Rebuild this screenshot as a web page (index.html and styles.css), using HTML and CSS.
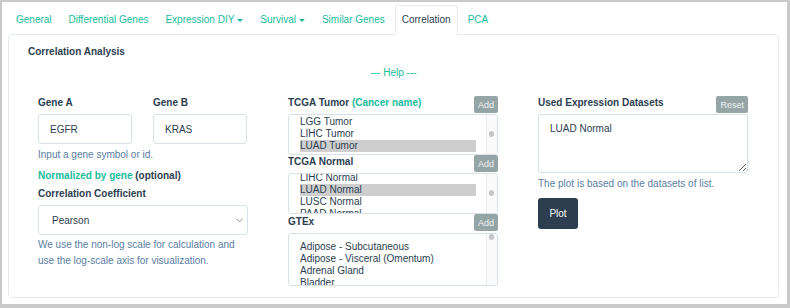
FILE: index.html
```html
<!DOCTYPE html>
<html lang="en">
<head>
    <meta charset="UTF-8">
    <meta name="viewport" content="width=device-width, initial-scale=1.0">
    <title>Correlation Analysis</title>
    <link rel="stylesheet" href="styles.css">
</head>
<body>
    <div class="frame">
        <ul class="tabs">
            <li><a>General</a></li>
            <li><a>Differential Genes</a></li>
            <li><a>Expression DIY<span class="caret"></span></a></li>
            <li><a>Survival<span class="caret"></span></a></li>
            <li><a>Similar Genes</a></li>
            <li class="active"><a>Correlation</a></li>
            <li><a>PCA</a></li>
        </ul>

        <div class="panel">
            <h4 class="title">Correlation Analysis</h4>
            <div class="help"><a>--- Help ---</a></div>

            <div class="cols">
                <!-- genes -->
                <div class="col">
                    <div class="genes">
                        <div>
                            <div class="head"><label>Gene A</label></div>
                            <input class="field" type="text" value="EGFR">
                        </div>
                        <div>
                            <div class="head"><label>Gene B</label></div>
                            <input class="field" type="text" value="KRAS">
                        </div>
                    </div>
                    <p class="hint hint-gene">Input a gene symbol or id.</p>
                    <p class="norm"><a>Normalized by gene</a> (optional)</p>
                    <p class="coef">Correlation Coefficient</p>
                    <div class="select">
                        <span>Pearson</span>
                        <svg width="7" height="5" viewBox="0 0 7 5"><polyline points="0.5,0.8 3.5,3.8 6.5,0.8" fill="none" stroke="#8a8a8a" stroke-width="1"/></svg>
                    </div>
                    <p class="hint hint-scale">We use the non-log scale for calculation and use the log-scale axis for visualization.</p>
                </div>

                <!-- datasets -->
                <div class="col">
                    <div class="head">
                        <label>TCGA Tumor <span class="green">(Cancer name)</span></label>
                        <button class="btn-add">Add</button>
                    </div>
                    <div class="list list-tumor">
                        <div class="opts">
                            <div class="opt">LGG Tumor</div>
                            <div class="opt">LIHC Tumor</div>
                            <div class="opt sel">LUAD Tumor</div>
                        </div>
                        <div class="scroll"><div class="thumb"></div></div>
                    </div>

                    <div class="head">
                        <label>TCGA Normal</label>
                        <button class="btn-add">Add</button>
                    </div>
                    <div class="list list-normal">
                        <div class="opts">
                            <div class="opt">LIHC Normal</div>
                            <div class="opt sel">LUAD Normal</div>
                            <div class="opt">LUSC Normal</div>
                            <div class="opt">PAAD Normal</div>
                        </div>
                        <div class="scroll"><div class="thumb"></div></div>
                    </div>

                    <div class="head head-gtex">
                        <label>GTEx</label>
                        <button class="btn-add">Add</button>
                    </div>
                    <div class="list list-gtex">
                        <div class="opts">
                            <div class="opt">Adipose - Subcutaneous</div>
                            <div class="opt">Adipose - Visceral (Omentum)</div>
                            <div class="opt">Adrenal Gland</div>
                            <div class="opt">Bladder</div>
                        </div>
                        <div class="scroll"><div class="thumb"></div></div>
                    </div>
                </div>

                <!-- used -->
                <div class="col">
                    <div class="head">
                        <label>Used Expression Datasets</label>
                        <button class="btn-add">Reset</button>
                    </div>
                    <textarea class="used">LUAD Normal</textarea>
                    <p class="hint hint-used">The plot is based on the datasets of list.</p>
                    <button class="btn-plot">Plot</button>
                </div>
            </div>
        </div>
    </div>
</body>
</html>
```

FILE: styles.css
```css
body {
    margin: 0;
    font-family: "Liberation Sans", Arial, sans-serif;
    font-size: 10px;
    color: #2c3e50;
}
.frame {
    height: 308px;
    box-sizing: border-box;
    border-style: solid;
    border-color: #c9c9c9;
    border-width: 2px 3px 4px 2px;
    background: #fff;
}
.tabs {
    position: relative;
    z-index: 1;
    display: flex;
    list-style: none;
    margin: 3px 0 0;
    padding: 0 0 0 7px;
}
.tabs a {
    display: block;
    line-height: 28px;
    padding: 0 6px;
    margin-right: 3px;
    border: 1px solid transparent;
    border-radius: 3px 3px 0 0;
    color: #18bc9c;
}
.tabs .active a {
    color: #2c3e50;
    background: #fff;
    border-color: #e6ecee;
    border-bottom-color: #fff;
}
.caret {
    display: inline-block;
    width: 0;
    height: 0;
    margin-left: 3px;
    vertical-align: middle;
    border-top: 3px solid #18bc9c;
    border-left: 3px solid transparent;
    border-right: 3px solid transparent;
}
.panel {
    height: 264px;
    box-sizing: border-box;
    margin: -1px 8px 0 6px;
    padding: 11px 19px 0;
    border: 1px solid #e6ecee;
    border-radius: 4px;
}
.title {
    margin: 0;
    font-size: 10px;
    line-height: 12px;
}
.help {
    margin-top: 9px;
    line-height: 12px;
    text-align: center;
    color: #18bc9c;
}
.cols {
    display: grid;
    grid-template-columns: 210px 210px 210px;
    column-gap: 40px;
    margin-top: 17px;
    padding-left: 10px;
}
.head {
    display: flex;
    justify-content: space-between;
    align-items: flex-start;
    height: 18px;
}
.head label {
    padding-top: 1px;
    line-height: 12px;
    font-weight: bold;
}
.head-gtex {
    height: 19px;
}
.head-gtex label {
    padding-top: 2px;
}
.green {
    color: #18bc9c;
}
.genes {
    display: grid;
    grid-template-columns: 94px 94px;
    column-gap: 21px;
}
.field {
    display: block;
    width: 100%;
    height: 30px;
    box-sizing: border-box;
    margin: 0;
    padding: 0 11px;
    border: 1px solid #d9e1e8;
    border-radius: 3px;
    font: inherit;
    color: #2c3e50;
    outline: none;
}
p {
    margin: 0;
    line-height: 12px;
}
.hint {
    color: #597ea2;
}
.hint-gene {
    margin-top: 5px;
}
.norm {
    margin-top: 9px;
    font-weight: bold;
}
.norm a {
    color: #18bc9c;
}
.coef {
    margin-top: 6px;
    font-weight: bold;
}
.select {
    display: flex;
    justify-content: space-between;
    align-items: center;
    height: 30px;
    box-sizing: border-box;
    margin-top: 5px;
    padding: 0 4px 0 13px;
    border: 1px solid #d9e1e8;
    border-radius: 3px;
}
.hint-scale {
    margin-top: 2px;
    line-height: 16px;
}
.btn-add {
    height: 17px;
    margin: 0;
    padding: 0 4px;
    border: none;
    border-radius: 2px;
    background: #95a5a6;
    color: #eef2f2;
    font-family: inherit;
    font-size: 9px;
}
.list {
    display: flex;
    box-sizing: border-box;
    border: 1px solid #d9e1e8;
    border-radius: 3px;
    overflow: hidden;
}
.list-tumor { height: 41px; }
.list-normal { height: 41px; }
.list-gtex { height: 53px; }
.opts {
    flex: 1;
    padding: 0 10px 0 11px;
    line-height: 12px;
    white-space: nowrap;
    color: #2c3e50;
}
.opt.sel {
    background: #cecece;
}
.list-tumor .opts { padding-top: 1px; }
.list-normal .opts { margin-top: -2px; }
.list-gtex .opts { padding-top: 7px; }
.scroll {
    width: 10px;
    border-left: 1px solid #ececec;
    background: #fafafa;
}
.thumb {
    width: 5px;
    height: 6px;
    margin-left: 2px;
    border-radius: 3px;
    background: #c6c6c6;
}
.list-tumor .thumb { margin-top: 16px; }
.list-normal .thumb { margin-top: 16px; }
.list-gtex .thumb { margin-top: 0; }
.used {
    display: block;
    width: 210px;
    height: 59px;
    box-sizing: border-box;
    margin: 0;
    padding: 8px 11px;
    border: 1px solid #d9e1e8;
    border-radius: 3px;
    font: inherit;
    line-height: 12px;
    color: #2c3e50;
    outline: none;
}
.hint-used {
    margin-top: 5px;
}
.btn-plot {
    display: block;
    width: 40px;
    height: 31px;
    margin-top: 8px;
    padding: 0;
    border: none;
    border-radius: 3px;
    background: #2c3e50;
    color: #fff;
    font-family: inherit;
    font-size: 10px;
}
```
